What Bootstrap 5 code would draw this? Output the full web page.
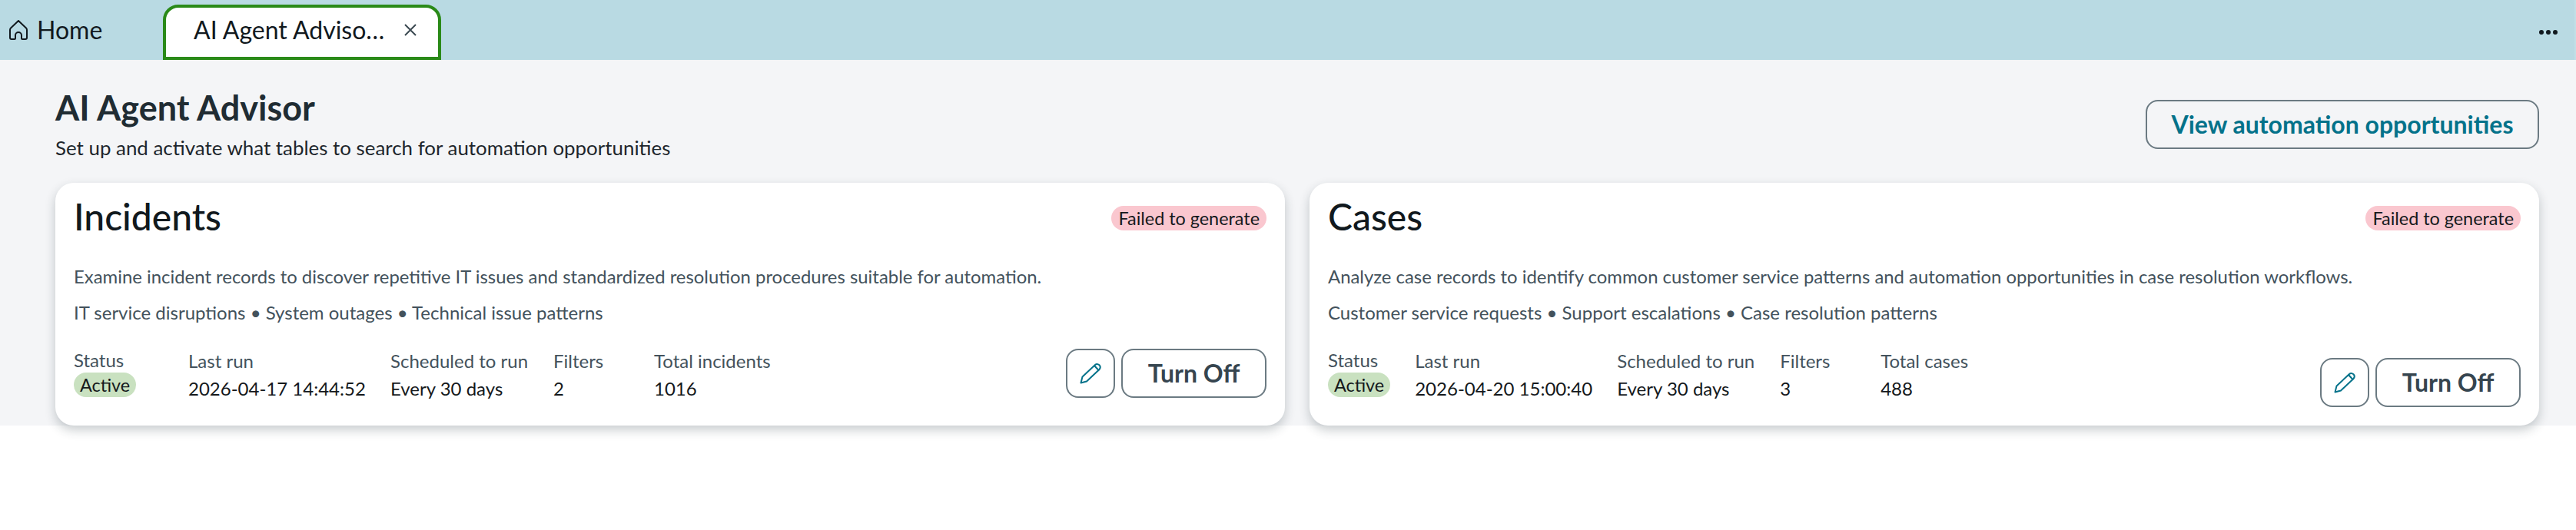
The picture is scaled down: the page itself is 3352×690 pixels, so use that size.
<!DOCTYPE html>
<html lang="en">
<head>
    <meta charset="UTF-8">
    <title>AI Agent Advisor</title>
    <link href="https://cdn.jsdelivr.net/npm/bootstrap@5.3.0/dist/css/bootstrap.min.css" rel="stylesheet">
    <style>
        body { font-family: Lato, "Open Sans", sans-serif; background: #fff; color: #15191c; }
        .tab-bar { height: 78px; background: #b9dae3; border-right: 2px solid #c2dfe7; padding-left: 12px; padding-right: 22px; }
        .home-tab { width: 200px; height: 72px; margin-top: 6px; padding-bottom: 6px; font-size: 32px; gap: 12px; color: #11191e; }
        .agent-tab { width: 362px; height: 72px; margin-top: 6px; padding: 0 28px 6px 36px; font-size: 32px; background: #fff; color: #11191e; border: 4px solid #2a8a18; border-radius: 20px 20px 0 0; }
        .more-btn { margin-top: 3px; }
        .page-main { height: 476px; background: #f4f5f7; padding: 32px 48px 0 72px; }
        .page-head { height: 128px; }
        .page-title { font-size: 45px; line-height: 60px; font-weight: 700; color: #202c33; margin: 0; }
        .page-sub { font-size: 25.9px; line-height: 36px; margin: 4px 0 0; color: #1d262c; }
        .outline-btn { height: 64px; border: 2px solid #6b7a82; border-radius: 16px; background: transparent; font-weight: 700; font-size: 32px; line-height: 1; padding: 0; display: flex; align-items: center; justify-content: center; color: #36454f; }
        .view-btn { width: 512px; margin-top: 20px; color: #04728a; }
        .icon-btn { width: 64px; }
        .off-btn { width: 189px; }
        .card-row { --bs-gutter-x: 32px; }
        .agent-card { height: 316px; padding: 16px 24px 0; border: 0; border-radius: 24px; box-shadow: 0 6px 14px rgba(30, 45, 55, .24); }
        .card-name { font-size: 48px; line-height: 56px; font-weight: 500; color: #11191e; margin: 0; }
        .fail-badge, .active-badge { height: 32px; padding: 0 9px; font-size: 23.4px; font-weight: 400; line-height: 32px; border-radius: 16px; color: #15191c; }
        .fail-badge { background: #fac7cf; margin-top: 14px; }
        .active-badge { background: #c9e1c0; padding: 0 8px; }
        .card-desc, .card-tags { font-size: 24px; line-height: 36px; color: #43525c; margin: 0; }
        .card-desc { margin-top: 32px; font-size: 23.9px; }
        .card-tags { margin-top: 11px; }
        .stats { margin-top: 29px; gap: 32px; font-size: 24px; line-height: 32px; white-space: nowrap; }
        .stat-label { color: #43525c; }
        .stat-value { margin-top: 4px; }
        .stat-status .stat-label { margin-top: -1px; }
        .stat-status-wide { width: 117px; }
        .stat-date { width: 231px; }
        .stat-sched { width: 180px; }
        .stat-filters { width: 99px; }
        .actions { gap: 8px; }
        .actions-high { margin-top: 29px; }
        .actions-low { margin-top: 41px; }
    </style>
</head>
<body class="min-vh-100">

<div class="tab-bar d-flex align-items-start">
    <div class="home-tab d-flex align-items-center">
        <svg width="24" height="26" viewBox="0 0 24 26" fill="none" stroke="#11191e" stroke-width="2" stroke-linejoin="round">
            <path d="M12 1 2 10.500Q1 11.500 1 13V23Q1 25 3 25H7Q8 25 8 24V20A4 4 0 0 1 16 20V24Q16 25 17 25H21Q23 25 23 23V13Q23 11.500 22 10.500Z"/>
        </svg>
        <span>Home</span>
    </div>
    <div class="agent-tab d-flex align-items-center justify-content-between">
        <span>AI Agent Adviso…</span>
        <svg width="16" height="16" viewBox="0 0 16 16" stroke="#3c4a52" stroke-width="2"><path d="M1 1 15 15M15 1 1 15"/></svg>
    </div>
    <div class="more-btn ms-auto d-flex align-items-center h-100">
        <svg width="24" height="8" viewBox="0 0 24 8" fill="#11191e"><circle cx="3" cy="4" r="3"/><circle cx="12" cy="4" r="3"/><circle cx="21" cy="4" r="3"/></svg>
    </div>
</div>

<div class="page-main">
    <div class="page-head d-flex justify-content-between align-items-start">
        <div>
            <h1 class="page-title">AI Agent Advisor</h1>
            <p class="page-sub">Set up and activate what tables to search for automation opportunities</p>
        </div>
        <button type="button" class="outline-btn view-btn">View automation opportunities</button>
    </div>

    <div class="row card-row">
        <div class="col-6">
            <div class="card agent-card">
                <div class="d-flex justify-content-between align-items-start">
                    <h2 class="card-name">Incidents</h2>
                    <span class="badge fail-badge">Failed to generate</span>
                </div>
                <p class="card-desc">Examine incident records to discover repetitive IT issues and standardized resolution procedures suitable for automation.</p>
                <p class="card-tags">IT service disruptions • System outages • Technical issue patterns</p>
                <div class="d-flex justify-content-between align-items-start">
                    <div class="stats d-flex">
                        <div class="stat-status stat-status-wide">
                            <div class="stat-label">Status</div>
                            <span class="badge active-badge d-inline-block">Active</span>
                        </div>
                        <div class="stat-date"><div class="stat-label">Last run</div><div class="stat-value">2026-04-17 14:44:52</div></div>
                        <div class="stat-sched"><div class="stat-label">Scheduled to run</div><div class="stat-value">Every 30 days</div></div>
                        <div class="stat-filters"><div class="stat-label">Filters</div><div class="stat-value">2</div></div>
                        <div><div class="stat-label">Total incidents</div><div class="stat-value">1016</div></div>
                    </div>
                    <div class="actions actions-high d-flex">
                        <button type="button" class="outline-btn icon-btn" aria-label="Edit">
                            <svg width="28" height="28" viewBox="0 0 28 28" fill="none" stroke="#04728a" stroke-width="2" stroke-linejoin="round">
                                <path d="M1.500 26.500 3.500 18.500 20 3Q22.500 .800 25.500 3.300 28 6 25.500 9L9 24.500Z"/>
                                <path d="M19 4 25 10.500"/>
                            </svg>
                        </button>
                        <button type="button" class="outline-btn off-btn">Turn Off</button>
                    </div>
                </div>
            </div>
        </div>
        <div class="col-6">
            <div class="card agent-card">
                <div class="d-flex justify-content-between align-items-start">
                    <h2 class="card-name">Cases</h2>
                    <span class="badge fail-badge">Failed to generate</span>
                </div>
                <p class="card-desc">Analyze case records to identify common customer service patterns and automation opportunities in case resolution workflows.</p>
                <p class="card-tags">Customer service requests • Support escalations • Case resolution patterns</p>
                <div class="d-flex justify-content-between align-items-start">
                    <div class="stats d-flex">
                        <div class="stat-status">
                            <div class="stat-label">Status</div>
                            <span class="badge active-badge d-inline-block">Active</span>
                        </div>
                        <div class="stat-date"><div class="stat-label">Last run</div><div class="stat-value">2026-04-20 15:00:40</div></div>
                        <div class="stat-sched"><div class="stat-label">Scheduled to run</div><div class="stat-value">Every 30 days</div></div>
                        <div class="stat-filters"><div class="stat-label">Filters</div><div class="stat-value">3</div></div>
                        <div><div class="stat-label">Total cases</div><div class="stat-value">488</div></div>
                    </div>
                    <div class="actions actions-low d-flex">
                        <button type="button" class="outline-btn icon-btn" aria-label="Edit">
                            <svg width="28" height="28" viewBox="0 0 28 28" fill="none" stroke="#04728a" stroke-width="2" stroke-linejoin="round">
                                <path d="M1.500 26.500 3.500 18.500 20 3Q22.500 .800 25.500 3.300 28 6 25.500 9L9 24.500Z"/>
                                <path d="M19 4 25 10.500"/>
                            </svg>
                        </button>
                        <button type="button" class="outline-btn off-btn">Turn Off</button>
                    </div>
                </div>
            </div>
        </div>
    </div>
</div>

<script src="https://cdn.jsdelivr.net/npm/bootstrap@5.3.0/dist/js/bootstrap.bundle.min.js"></script>
</body>
</html>
